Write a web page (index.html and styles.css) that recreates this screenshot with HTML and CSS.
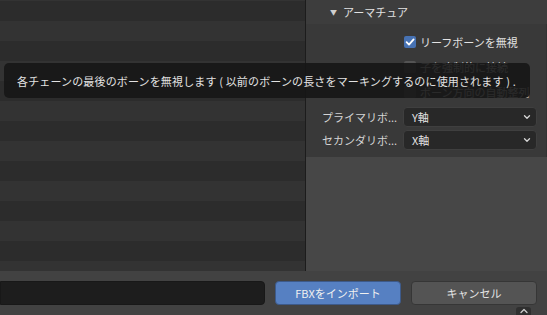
FILE: index.html
```html
<!DOCTYPE html>
<html lang="ja">
<head>
    <meta charset="UTF-8">
    <meta name="viewport" content="width=device-width, initial-scale=1.0">
    <title>FBXをインポート</title>
    <link rel="stylesheet" href="styles.css">
</head>
<body>
    <div class="window">
        <div class="main">
            <div class="file-list">
                <div class="row"></div><div class="row"></div><div class="row"></div>
                <div class="row"></div><div class="row"></div><div class="row"></div>
                <div class="row"></div><div class="row"></div><div class="row"></div>
                <div class="row"></div><div class="row"></div><div class="row"></div>
                <div class="row"></div><div class="row"></div>
            </div>

            <div class="sidebar">
                <div class="panel-head">
                    <span class="arrow">&#9660;</span>
                    <span>アーマチュア</span>
                </div>
                <div class="panel-body">
                    <div class="check-row">
                        <span class="checkbox on">
                            <svg viewBox="0 0 12 12" width="12" height="12"><path d="M2.6 6.2 L5 8.6 L9.6 3.4" fill="none" stroke="#fff" stroke-width="1.8" stroke-linecap="round" stroke-linejoin="round"/></svg>
                        </span>
                        <span class="check-label">リーフボーンを無視</span>
                    </div>
                    <div class="check-row">
                        <span class="checkbox"></span>
                        <span class="check-label">子を強制的に接続</span>
                    </div>
                    <div class="check-row">
                        <span class="checkbox"></span>
                        <span class="check-label">ボーン方向の自動整列</span>
                    </div>
                    <div class="field-row">
                        <span class="field-label">プライマリボ...</span>
                        <div class="select">
                            <span>Y軸</span>
                            <svg viewBox="0 0 10 10" width="10" height="10"><path d="M2.5 3.8 L5 6.2 L7.5 3.8" fill="none" stroke="#d8d8d8" stroke-width="1.3" stroke-linecap="round" stroke-linejoin="round"/></svg>
                        </div>
                    </div>
                    <div class="field-row">
                        <span class="field-label">セカンダリボ...</span>
                        <div class="select">
                            <span>X軸</span>
                            <svg viewBox="0 0 10 10" width="10" height="10"><path d="M2.5 3.8 L5 6.2 L7.5 3.8" fill="none" stroke="#d8d8d8" stroke-width="1.3" stroke-linecap="round" stroke-linejoin="round"/></svg>
                        </div>
                    </div>
                </div>
                <div class="sidebar-rest"></div>
            </div>
        </div>

        <div class="footer">
            <div class="filename"></div>
            <button class="btn btn-primary">FBXをインポート</button>
            <button class="btn">キャンセル</button>
            <div class="corner-tab">
                <svg viewBox="0 0 12 8" width="12" height="8"><path d="M3 5.5 L6 2.5 L9 5.5" fill="none" stroke="#cfcfcf" stroke-width="1.3" stroke-linecap="round" stroke-linejoin="round"/></svg>
            </div>
        </div>

        <div class="tooltip">各チェーンの最後のボーンを無視します ( 以前のボーンの長さをマーキングするのに使用されます ) .</div>
    </div>
</body>
</html>
```

FILE: styles.css
```css
* {
    margin: 0;
    padding: 0;
    box-sizing: border-box;
    font-family: 'Noto Sans CJK JP', 'DejaVu Sans', sans-serif;
}

body {
    background-color: #3d3d3d;
    width: 547px;
    height: 315px;
    overflow: hidden;
}

.window {
    position: relative;
    width: 547px;
    height: 315px;
}

.main {
    display: flex;
    height: 271px;
}

/* file list with striped rows */
.file-list {
    width: 306px;
    padding-top: 1px;
    background-color: #333;
    border-right: 1px solid #1c1c1c;
    overflow: hidden;
}

.row {
    height: 20px;
}

.row:nth-child(odd) {
    background-color: #2c2c2c;
}

.row:nth-child(even) {
    background-color: #333;
}

/* right side panel */
.sidebar {
    flex: 1;
    display: flex;
    flex-direction: column;
    background-color: #474747;
}

.panel-head {
    height: 24px;
    display: flex;
    align-items: center;
    gap: 6px;
    padding-left: 24px;
    background-color: #3d3d3d;
    color: #e2e2e2;
    font-size: 11px;
}

.arrow {
    font-size: 7px;
    color: #cfcfcf;
}

.panel-body {
    height: 133px;
    padding: 5px 9px 0 16px;
    background-color: #393939;
    border-right: 1px solid #333;
}

.check-row {
    height: 25px;
    display: flex;
    align-items: center;
    gap: 4px;
    padding-left: 82px;
}

.checkbox {
    width: 12px;
    height: 12px;
    border-radius: 2px;
    background-color: #545454;
    display: flex;
    align-items: center;
    justify-content: center;
}

.checkbox.on {
    background-color: #4772b3;
}

.check-label {
    color: #e2e2e2;
    font-size: 11px;
}

.field-row {
    display: flex;
    align-items: center;
    margin-top: 3px;
}

.field-row:first-of-type {
    margin-top: 0;
}

.field-label {
    width: 81px;
    color: #d4d4d4;
    font-size: 11px;
}

.select {
    flex: 1;
    height: 20px;
    display: flex;
    align-items: center;
    justify-content: space-between;
    padding: 0 4px 0 8px;
    background-color: #282828;
    border: 1px solid #3f3f3f;
    border-radius: 4px;
    color: #e2e2e2;
    font-size: 11px;
}

.sidebar-rest {
    flex: 1;
}

/* bottom bar */
.footer {
    height: 44px;
    display: flex;
    align-items: center;
    gap: 10px;
    padding-right: 10px;
    background-color: #424242;
}

.filename {
    width: 265px;
    height: 24px;
    background-color: #1d1d1d;
    border: 1px solid #181818;
    border-radius: 0 4px 4px 0;
}

.btn {
    width: 126px;
    height: 24px;
    border: 1px solid #363636;
    border-radius: 4px;
    background-color: #545454;
    color: #e4e4e4;
    font-size: 11px;
}

.btn-primary {
    background-color: #5680c2;
    border-color: #3d5a8a;
    color: #f0f0f0;
}

.corner-tab {
    position: absolute;
    left: 516px;
    top: 307px;
    width: 15px;
    height: 10px;
    display: flex;
    justify-content: center;
    border-radius: 3px 3px 0 0;
    background-color: #2f2f2f;
}

/* tooltip over the list */
.tooltip {
    position: absolute;
    left: 4px;
    top: 63px;
    width: 526px;
    height: 35px;
    padding-left: 13px;
    display: flex;
    align-items: center;
    background-color: rgba(22, 22, 22, 0.9);
    border-radius: 5px;
    color: #e2e2e2;
    font-size: 11px;
    letter-spacing: 0.15px;
    white-space: nowrap;
}
```
